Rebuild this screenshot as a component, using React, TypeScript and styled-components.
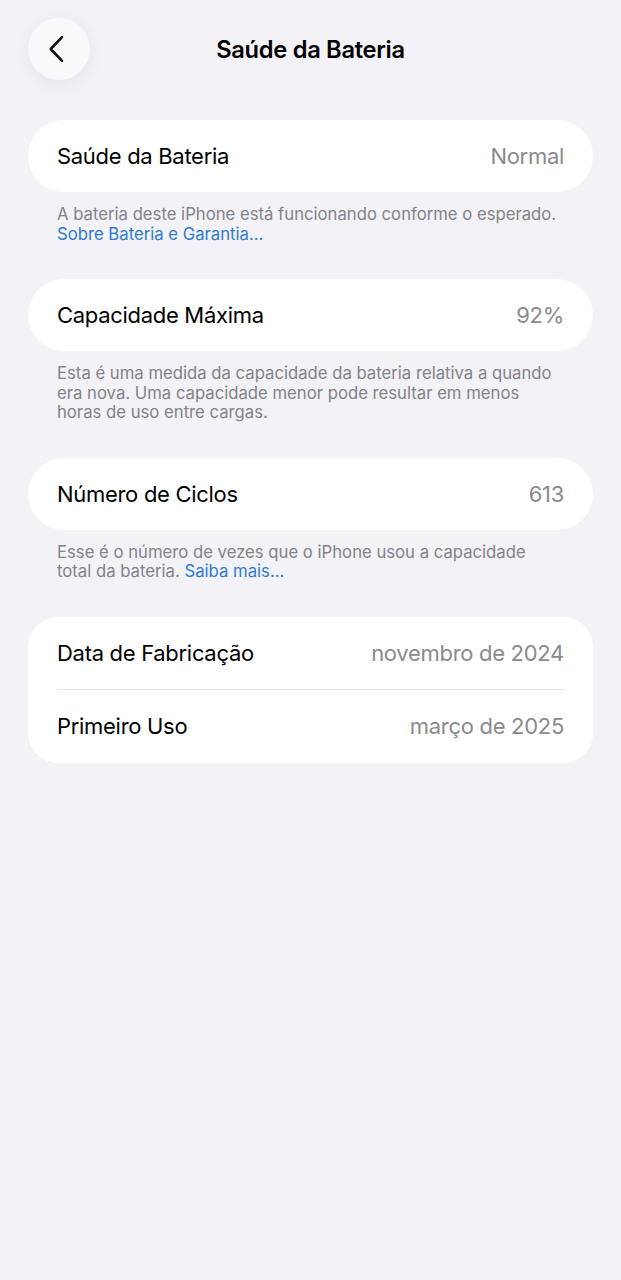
import React from 'react';
import styled, { createGlobalStyle } from 'styled-components';

const GlobalStyle = createGlobalStyle`
  html, body {
    margin: 0;
    padding: 0;
    background: #f2f2f7;
  }
  body {
    font-family: Inter, 'Noto Sans', 'Liberation Sans', sans-serif;
    -webkit-font-smoothing: antialiased;
  }
`;

const Page = styled.div`
  min-height: 1280px;
  background: #f2f2f7;
  padding: 18px 28px 40px 28px;
  box-sizing: border-box;
`;

const Header = styled.header`
  position: relative;
  display: flex;
  align-items: center;
  justify-content: center;
  height: 62px;
`;

const BackButton = styled.button`
  position: absolute;
  left: 0;
  top: 0;
  width: 62px;
  height: 62px;
  border-radius: 50%;
  border: none;
  background: #f9f9fb;
  box-shadow: 0 4px 18px rgba(0, 0, 0, 0.06);
  display: flex;
  align-items: center;
  justify-content: center;
  padding: 0 5px 0 0;
  cursor: pointer;
`;

const Title = styled.h1`
  margin: 0 0 0 0;
  font-size: 23.7px;
  font-weight: 600;
  color: #000;
  letter-spacing: -0.3px;
`;

const List = styled.div`
  display: flex;
  flex-direction: column;
  margin-top: 40px;
`;

const Section = styled.section`
  display: flex;
  flex-direction: column;
  margin-bottom: 35px;
`;

const Card = styled.div<{ $single: boolean }>`
  background: #fff;
  border-radius: ${(p) => (p.$single ? '36px' : '30px')};
  padding: 0 29px 0 29px;
  display: flex;
  flex-direction: column;
`;

const CardRow = styled.div<{ $divider: boolean }>`
  height: ${(p) => (p.$divider ? '74px' : '72px')};
  display: flex;
  align-items: center;
  justify-content: space-between;
  border-top: ${(p) => (p.$divider ? '1px solid #e3e3e8' : 'none')};
  box-sizing: border-box;
`;

const Label = styled.span`
  font-size: 22px;
  color: #000;
  letter-spacing: -0.3px;
`;

const Value = styled.span`
  font-size: 22px;
  color: #8a8a8e;
  letter-spacing: -0.3px;
`;

const Footer = styled.p`
  margin: 13px 0 0 0;
  padding: 0 31px 0 29px;
  font-size: 16.7px;
  line-height: 19.5px;
  color: #838388;
`;

const FooterLink = styled.span`
  color: #2f7bd0;
`;

type Row = { label: string; value: string };

const sections: { rows: Row[]; footer?: React.ReactNode }[] = [
  {
    rows: [{ label: 'Saúde da Bateria', value: 'Normal' }],
    footer: (
      <>
        A bateria deste iPhone está funcionando conforme o esperado.
        <br />
        <FooterLink>Sobre Bateria e Garantia...</FooterLink>
      </>
    ),
  },
  {
    rows: [{ label: 'Capacidade Máxima', value: '92%' }],
    footer:
      'Esta é uma medida da capacidade da bateria relativa a quando era nova. Uma capacidade menor pode resultar em menos horas de uso entre cargas.',
  },
  {
    rows: [{ label: 'Número de Ciclos', value: '613' }],
    footer: (
      <>
        Esse é o número de vezes que o iPhone usou a capacidade total da bateria.{' '}
        <FooterLink>Saiba mais...</FooterLink>
      </>
    ),
  },
  {
    rows: [
      { label: 'Data de Fabricação', value: 'novembro de 2024' },
      { label: 'Primeiro Uso', value: 'março de 2025' },
    ],
  },
];

export default function App() {
  return (
    <Page>
      <GlobalStyle />
      <Header>
        <BackButton aria-label="Voltar">
          <svg width="30" height="30" viewBox="0 0 24 24" fill="none">
            <path
              d="M16 2.5L7 12L16 21.5"
              stroke="#111"
              strokeWidth="2.1"
              strokeLinecap="round"
              strokeLinejoin="round"
            />
          </svg>
        </BackButton>
        <Title>Saúde da Bateria</Title>
      </Header>

      <List>
        {sections.map((section, i) => (
          <Section key={i}>
            <Card $single={section.rows.length === 1}>
              {section.rows.map((row, j) => (
                <CardRow key={j} $divider={j > 0}>
                  <Label>{row.label}</Label>
                  <Value>{row.value}</Value>
                </CardRow>
              ))}
            </Card>
            {section.footer && <Footer>{section.footer}</Footer>}
          </Section>
        ))}
      </List>
    </Page>
  );
}
